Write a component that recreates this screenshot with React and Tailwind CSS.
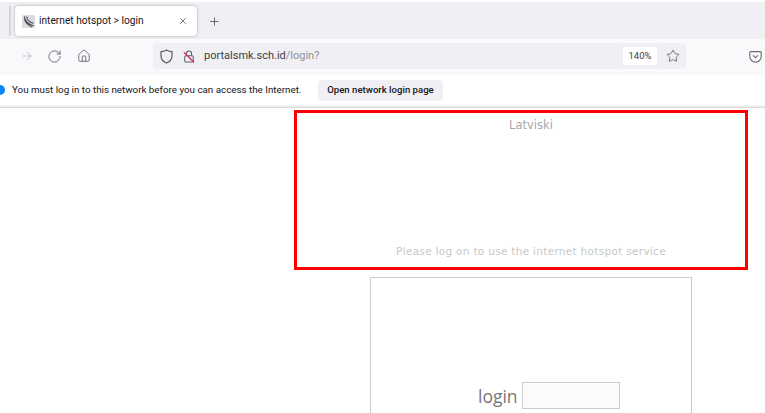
import React from 'react';
import { RotateCw, Home, Plus, X, ArrowRight, ArrowLeft, Star } from 'lucide-react';

const uiFont = { fontFamily: 'Roboto, "Noto Sans", sans-serif' };

// mikrotik style favicon
const TabLogo = () => (
  <svg width="13" height="13" viewBox="0 0 14 14" className="shrink-0">
    <rect width="14" height="14" rx="2" fill="#dcdce0" />
    <path d="M2.5 1.5C3 6 6 10 12.5 11.5M2.5 4C3.5 8 7 11.5 11 13M5 1.5C5.5 5 8 8 12.5 9" fill="none" stroke="#4a4a52" strokeWidth="1.1" />
  </svg>
);

const ShieldIcon = () => (
  <svg width="13" height="15" viewBox="0 0 13 15" fill="none" stroke="#5b5b66" strokeWidth="1.2">
    <path d="M6.5 1C8 2 10 2.6 12 2.6V7c0 3.4-2.4 5.8-5.5 7C3.4 12.8 1 10.4 1 7V2.6C3 2.6 5 2 6.5 1z" />
  </svg>
);

const BrokenLock = () => (
  <svg width="12" height="15" viewBox="0 0 14 16" fill="none" stroke="#5b5b66" strokeWidth="1.2">
    <rect x="2" y="7" width="10" height="7.5" rx="1.5" />
    <path d="M4 7V4.5a3 3 0 0 1 6 0V7" />
    <path d="M1 3l12 12" stroke="#e22850" strokeWidth="1.4" />
  </svg>
);

const PocketIcon = () => (
  <svg width="13" height="13" viewBox="0 0 16 16" fill="none" stroke="#6e6e78" strokeWidth="1.4">
    <path d="M2 2h12a1 1 0 0 1 1 1V8a7 7 0 0 1-14 0V3a1 1 0 0 1 1-1z" />
    <path d="M5 6.5l3 3 3-3" />
  </svg>
);

const TabStrip = () => (
  <div className="mt-[2px] h-[37px] bg-[#f0f0f4] flex items-center">
    <div className="w-[11px] h-[30px] border-r-2 border-[#d4d4d8] mr-[4px]" />
    <div className="w-[182px] h-[30px] bg-white rounded-[4px] shadow-[0_0_3px_rgba(0,0,0,0.3)] flex items-center pl-[7px] pr-[9px] mt-[1px]">
      <TabLogo />
      <span className="ml-[4px] text-[10.2px] text-[#15141a] flex-1 whitespace-nowrap" style={uiFont}>internet hotspot &gt; login</span>
      <X size={10} strokeWidth={1.6} className="text-[#3a3a42]" />
    </div>
    <Plus size={13} strokeWidth={1.4} className="ml-[11px] mt-[1px] text-[#45454d]" />
  </div>
);

const Toolbar = () => (
  <div className="h-[36px] bg-[#f9f9fb] flex items-center pb-[2px]">
    <ArrowLeft size={14} strokeWidth={1.4} className="ml-[-12px] text-[#5b5b66]" />
    <ArrowRight size={14} strokeWidth={1.4} className="ml-[18px] text-[#b9b9bf]" />
    <RotateCw size={15} strokeWidth={1.4} className="ml-[13px] text-[#5b5b66]" />
    <Home size={14} strokeWidth={1.4} className="ml-[15px] text-[#5b5b66]" />
    <div className="ml-[62px] w-[533px] h-[26px] bg-[#f0f0f4] rounded-[4px] flex items-center pl-[7px] pr-[4px]">
      <ShieldIcon />
      <div className="ml-[10px] flex"><BrokenLock /></div>
      <span className="ml-[9px] text-[11px] text-[#3e3d44] flex-1" style={uiFont}>portalsmk.sch.id<span className="text-[#8f8f96]">/login?</span></span>
      <span className="w-[34px] h-[18px] bg-white rounded-[3px] flex items-center justify-center text-[9.5px] text-[#3e3d44]" style={uiFont}>140%</span>
      <Star size={14} strokeWidth={1.4} className="ml-[9px] mr-[2px] text-[#5b5b66]" />
    </div>
    <div className="ml-[63px]"><PocketIcon /></div>
  </div>
);

const Notice = () => (
  <div className="h-[30px] bg-white flex items-center">
    <div className="w-[10px] h-[10px] ml-[-5px] rounded-full bg-[#0a84ff]" />
    <span className="ml-[7px] w-[289px] text-[9.8px] text-[#15141a] whitespace-nowrap" style={uiFont}>You must log in to this network before you can access the Internet.</span>
    <button className="ml-[17px] w-[125px] h-[21px] bg-[#f0f0f4] rounded-[4px] text-[9.6px] font-medium text-[#15141a] whitespace-nowrap" style={uiFont}>Open network login page</button>
  </div>
);

export default function App() {
  return (
    <div className="w-[765px] h-[413px] overflow-hidden bg-white">
      <TabStrip />
      <Toolbar />
      <Notice />
      <div className="h-[3px] bg-[#f0f0f0] border-b border-[#d8d8d8]" />
      <div className="ml-[294px] mt-[2px] w-[454px] h-[160px] border-[3px] border-[#ff0000] flex flex-col items-center justify-between pt-[4px] pb-[7px] pl-[20px] font-['DejaVu_Sans',sans-serif] text-[#c8c8c8]">
        <span className="text-[11.5px] text-[#a8a8a8]">Latviski</span>
        <span className="text-[10.5px] tracking-[0.3px]">Please log on to use the internet hotspot service</span>
      </div>
      <div className="ml-[370px] mt-[7px] w-[322px] h-[200px] border border-[#cccccc] border-b-0 pt-[104px] pl-[107px] flex items-start">
        <span className="text-[17.5px] leading-[28px] text-[#777] mr-[4px]" style={{ fontFamily: '"Open Sans", sans-serif' }}>login</span>
        <input className="w-[98px] h-[27px] border border-[#cccccc] bg-[#fdfafa]" />
      </div>
    </div>
  );
}
